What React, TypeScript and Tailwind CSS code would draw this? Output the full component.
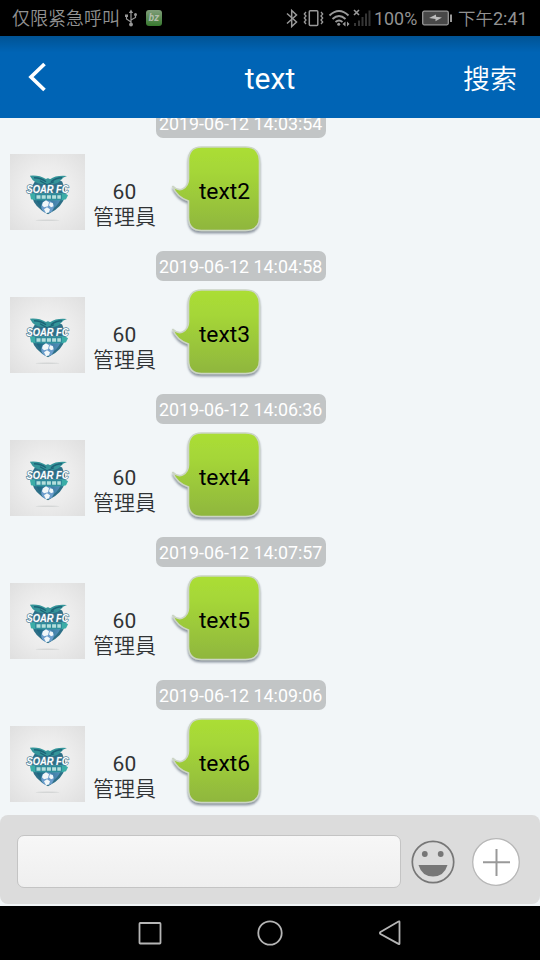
import React from "react";

const messages = [
  { time: "2019-06-12 14:03:54", text: "text2" },
  { time: "2019-06-12 14:04:58", text: "text3" },
  { time: "2019-06-12 14:06:36", text: "text4" },
  { time: "2019-06-12 14:07:57", text: "text5" },
  { time: "2019-06-12 14:09:06", text: "text6" },
];

function StatusBar() {
  return (
    <div className="flex h-9 shrink-0 items-center bg-black pl-3 text-[18px] leading-9 text-[#929292]">
      <span className="w-[108px] whitespace-nowrap pt-0.5 font-[350]">仅限紧急呼叫</span>
      <svg className="ml-[3px] h-[18px] w-4" viewBox="0 0 16 18" fill="none" stroke="#999" strokeWidth="1.2">
        <path d="M8 3v12M8 13L3.500 10V7M8 11l4.500-2.500V5.500" />
        <path d="M8 .5L5.800 4h4.400zM2 5.500h3v2.500H2z" fill="#999" stroke="none" />
        <circle cx="8" cy="15.500" r="1.900" fill="#999" stroke="none" />
        <circle cx="12.500" cy="5.500" r="1.500" fill="#999" stroke="none" />
      </svg>
      <span className="ml-[7px] flex h-4 w-4 items-center justify-center rounded-[3px] bg-linear-to-b from-[#7f9d79] to-[#36792d] text-[10px] font-bold italic leading-4 text-[#b2bdac]">
        bz
      </span>
      <svg className="ml-[123px] h-7 w-[88px]" viewBox="285 4 88 28" fill="none" stroke="#999">
        <path d="M287 13.500l9.500 8.500-4.800 4.500v-16l4.800 4.500-9.500 8.500" strokeWidth="1.500" />
        <rect x="309.300" y="10.800" width="8.500" height="14.700" rx="1" strokeWidth="1.500" />
        <path d="M306 12l-1.700 2 1.700 2-1.700 2 1.700 2-1.700 2 1.700 2M321 12l1.700 2-1.700 2 1.700 2-1.700 2 1.700 2-1.700 2" strokeWidth="1.300" />
        <path d="M329.500 15.500q9.500-9 19 0M332.500 19q6.500-6 13 0M335.500 22q3.500-3 7 0" strokeWidth="1.900" />
        <circle cx="338.700" cy="24.300" r="1.500" fill="#999" stroke="none" />
        <path d="M345.500 21.500v5l-3-2.500zM347 21.500v5l2.500-2.500z" fill="#999" stroke="none" />
        <path d="M354 10l5 5m0-5l-5 5" strokeWidth="1.600" />
        <path d="M355 23v3M359 20.500V26M362.500 17v9M366 13.500V26M369.500 10.500V26" stroke="#353535" strokeWidth="2" />
      </svg>
      <span className="ml-[1px] w-[43px] whitespace-nowrap pt-0.5 text-[17.900px]">100%</span>
      <svg className="ml-[5px] h-4 w-[31px]" viewBox="0 0 31 16">
        <rect x=".7" y="1.200" width="25.600" height="13.600" rx="1.500" fill="#484848" stroke="#999" strokeWidth="1.300" />
        <path d="M28 4.500h2v7.500h-2z" fill="#999" />
        <path d="M7 8l7-3.500v2.200l6 .8-6.500 3.700V9z" fill="#bbb" />
      </svg>
      <span className="ml-[5px] whitespace-nowrap pt-0.5 text-[17.500px] font-[350]">
        下午<span className="text-[18px] font-normal">2:41</span>
      </span>
    </div>
  );
}

function Header() {
  return (
    <header className="flex h-[82px] shrink-0 items-center justify-between bg-linear-to-b from-[#005394] via-[#0064b5] via-20% to-[#0064b5] pl-7 pr-[23px] text-white">
      <div className="w-[70px]">
        <svg className="h-[30px] w-[18px]" viewBox="0 0 18 30" fill="none" stroke="white" strokeWidth="3.700">
          <path d="M16.500 2L3 15l13.500 13" />
        </svg>
      </div>
      <h1 className="-ml-[5px] pt-1 text-[30px] leading-9">text</h1>
      <span className="w-[70px] whitespace-nowrap pt-1.5 text-right text-[27px] font-[350] leading-9">搜索</span>
    </header>
  );
}

function Avatar() {
  return (
    <div className="mt-4 h-[75.500px] w-[75px] shrink-0 bg-radial from-[#f5f5f5] via-[#ececec] to-[#dfdfdf]">
      <svg className="h-full w-full" viewBox="0 0 75 75">
        <defs>
          <linearGradient id="ball" x2="1">
            <stop stopColor="#17647c" />
            <stop offset="1" stopColor="#5790bd" />
          </linearGradient>
        </defs>
        <ellipse cx="37.500" cy="66" rx="12" ry=".8" fill="#d4d6d6" />
        <path d="M25 27l13-2 14 2 3 8v6q-2 12-17 19Q24 53 22 42l-1-8z" fill="#2d6f87" />
        <path d="M26 44h25q-3 9-13 13.500Q28 53 26 44z" fill="url(#ball)" />
        <path d="M20 21.500q9-.8 16 3.200 2-1.500 4 .2 6-4.200 17-3.200-4 1-6 4-3 4-9 4l-4 2-5-2q-9 0-13-8z" fill="#35959a" />
        <path d="M24 23.500q7 0 12 4M52 23.500q-6 0-11 4M30 26.500l7 4 7-3" fill="none" stroke="#1c6377" strokeWidth="1.300" />
        <path d="M22 39h33l3 2-2 4-4 1H26l-5-1-1-5z" fill="#3bada7" />
        <path d="M25 39.500h27v6H25z" fill="#2d899a" />
        <path d="M26.500 41h4v3.500h-4zm5.200 0h4v3.500h-4zm5.200 0h4v3.500h-4zm5.200 0h4v3.500h-4zm5.200 0h3.500v3.500h-3.500z" fill="#b4dfdc" />
        <circle cx="37.500" cy="52.500" r="6.300" fill="#6b9dcc" />
        <path d="M33 48l3-2 3 2-1 4-4 1-2-2zM34 55l3-2 3 2-1 3-3 1zM40 48l3 1 .5 3-2.500 1-2-2z" fill="#f1f7f9" />
        <text x="16.500" y="38.600" textLength="42" lengthAdjust="spacingAndGlyphs" fontFamily="Liberation Sans, sans-serif" fontSize="11.300" fontWeight="700" fontStyle="italic" fill="#fff" stroke="#4e7f98" strokeWidth="1.600" paintOrder="stroke" strokeLinejoin="round">
          SOAR FC
        </text>
      </svg>
    </div>
  );
}

function Bubble({ text }: { text: string }) {
  return (
    <div className="relative mt-1.5 ml-[13.500px] h-[92px] w-[94px] shrink-0">
      <svg className="absolute inset-0 h-full w-full" viewBox="170.500 144 94 92">
        <defs>
          <linearGradient id="green" x2="0" y2="1">
            <stop stopColor="#abde35" />
            <stop offset=".3" stopColor="#a5d638" />
            <stop offset="1" stopColor="#8fb63d" />
          </linearGradient>
          <filter id="shadow" x="-10%" y="-10%" width="120%" height="125%">
            <feDropShadow dx="0" dy="2.2" stdDeviation=".8" floodColor="#6c7482" floodOpacity=".75" />
          </filter>
        </defs>
        <path
          d="M202 147h44q14 0 14 14v56q0 13.500-14 13.500h-44q-13 0-13-13.500v-16q-12-4-16-15 5 5 10 3 6-3 6-10v-18q0-14 13-14z"
          fill="url(#green)"
          stroke="#ccd5c5"
          strokeWidth="1.600"
          filter="url(#shadow)"
        />
      </svg>
      <span className="relative block pl-[29px] pt-8 text-[22.800px] leading-8 text-black">{text}</span>
    </div>
  );
}

function Message({ time, text }: { time: string; text: string }) {
  return (
    <article className="h-[143px] shrink-0">
      <time className="ml-[156px] block h-[30px] w-[170px] whitespace-nowrap rounded-[7px] bg-[#c2c5c6] pl-[3px] text-[17.850px] leading-[31px] text-white">
        {time}
      </time>
      <div className="flex pl-[10.400px]">
        <Avatar />
        <div className="mt-[42px] ml-[7px] w-[64px] shrink-0 whitespace-nowrap text-center text-[21px] leading-[25px] text-[#303335]">
          <div>60</div>
          <div className="font-[350]">管理員</div>
        </div>
        <Bubble text={text} />
      </div>
    </article>
  );
}

function InputBar() {
  return (
    <div className="h-[91px] shrink-0 bg-[#f2f6f8]">
      <div className="flex h-[89px] items-center rounded-lg bg-[#dcdcdc] pl-[17px] pt-1">
        <div className="h-[53px] w-[384px] rounded-[7px] border border-[#c4c4c4] bg-linear-to-b from-[#f7f7f7] to-[#efefef]" />
        <svg className="ml-[10px] h-11 w-11" viewBox="0 0 44 44">
          <circle cx="22" cy="22" r="20.700" fill="none" stroke="#777" strokeWidth="1.700" />
          <circle cx="13.800" cy="14" r="2.900" fill="#777" />
          <circle cx="29.700" cy="14" r="2.900" fill="#777" />
          <path d="M7.500 25h29q-3.500 11.500-14.500 11.500T7.500 25z" fill="#777" />
        </svg>
        <svg className="ml-[17px] h-12 w-12" viewBox="0 0 48 48">
          <circle cx="24" cy="24" r="23.300" fill="white" stroke="#b7b7b7" strokeWidth="1.300" />
          <path d="M11 24.300h27M24.500 11v27" stroke="#999" strokeWidth="2" />
        </svg>
      </div>
    </div>
  );
}

function NavBar() {
  return (
    <nav className="flex h-[54px] shrink-0 items-center justify-center bg-black">
      <svg className="h-[54px] w-[270px]" viewBox="0 0 270 54" fill="none" stroke="#b5b5b5" strokeWidth="1.800">
        <rect x="4.500" y="17" width="21" height="20.500" rx=".7" />
        <circle cx="135" cy="27" r="11.700" />
        <path d="M264.500 16v21.500q0 1-1 .4L245.500 28q-1.200-1 0-2l18-10.500q1-.6 1 .5z" />
      </svg>
    </nav>
  );
}

export default function App() {
  return (
    <div className="flex h-[960px] w-[540px] flex-col overflow-hidden bg-[#f2f6f8] font-['Roboto','Noto_Sans_CJK_SC',sans-serif]">
      <StatusBar />
      <Header />
      <main className="h-[697px] shrink-0 overflow-hidden">
        <div className="-mt-[10px] flex flex-col">
          {messages.map((message) => (
            <Message key={message.time} {...message} />
          ))}
        </div>
      </main>
      <InputBar />
      <NavBar />
    </div>
  );
}
